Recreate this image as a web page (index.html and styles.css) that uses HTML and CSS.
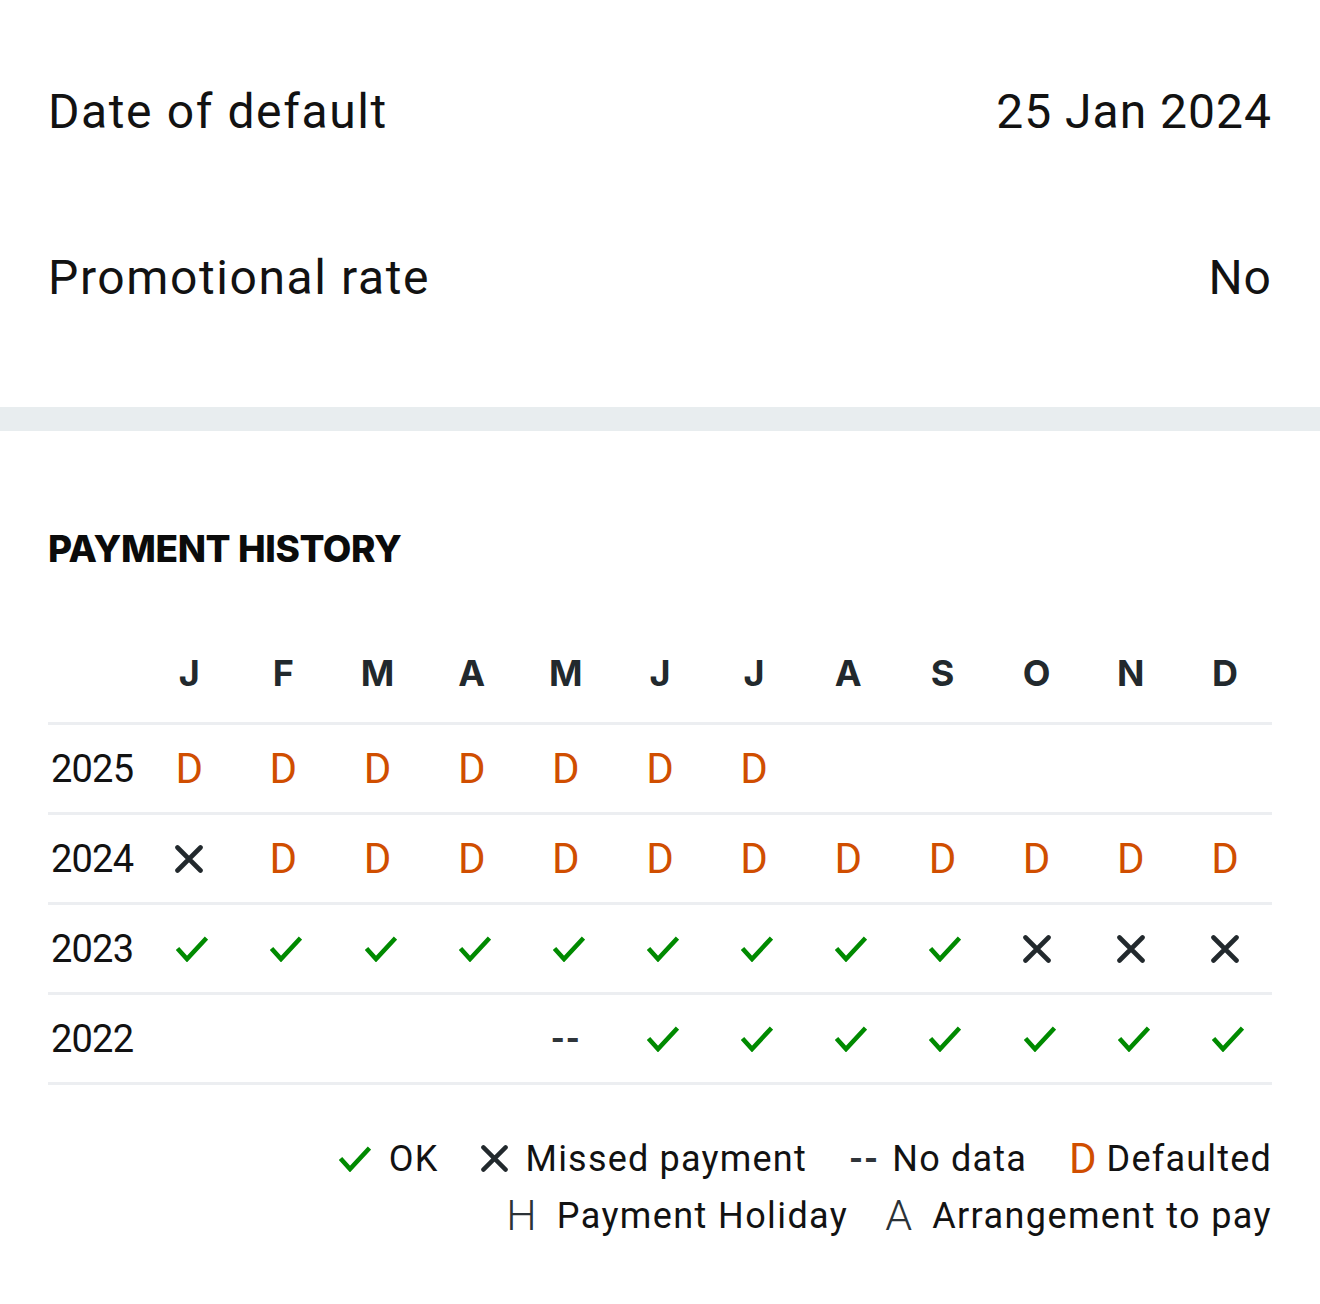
FILE: index.html
```html
<!DOCTYPE html>
<html lang="en">
<head>
<meta charset="utf-8">
<title>Account details</title>
<link rel="stylesheet" href="styles.css">
</head>
<body>
<section class="details">
  <div class="detail-row"><span class="label">Date of default</span><span class="value">25 Jan 2024</span></div>
  <div class="detail-row"><span class="label">Promotional rate</span><span class="value">No</span></div>
</section>
<div class="divider"></div>
<section class="history">
  <h2 class="title">PAYMENT HISTORY</h2>
  <div class="grid">
    <div class="row head">
      <span class="cell year"></span>
      <span class="cell m">J</span><span class="cell m">F</span><span class="cell m">M</span><span class="cell m">A</span><span class="cell m">M</span><span class="cell m">J</span><span class="cell m">J</span><span class="cell m">A</span><span class="cell m">S</span><span class="cell m">O</span><span class="cell m">N</span><span class="cell m">D</span>
    </div>
    <div class="row">
      <span class="cell year">2025</span>
      <span class="cell d">D</span><span class="cell d">D</span><span class="cell d">D</span><span class="cell d">D</span><span class="cell d">D</span><span class="cell d">D</span><span class="cell d">D</span><span class="cell"></span><span class="cell"></span><span class="cell"></span><span class="cell"></span><span class="cell"></span>
    </div>
    <div class="row">
      <span class="cell year">2024</span>
      <span class="cell"><svg class="ic-x" viewBox="0 0 28 28"><path d="M2.5 2.5L25.5 25.5M25.5 2.5L2.5 25.5"/></svg></span>
      <span class="cell d">D</span><span class="cell d">D</span><span class="cell d">D</span><span class="cell d">D</span><span class="cell d">D</span><span class="cell d">D</span><span class="cell d">D</span><span class="cell d">D</span><span class="cell d">D</span><span class="cell d">D</span><span class="cell d">D</span>
    </div>
    <div class="row">
      <span class="cell year">2023</span>
      <span class="cell ok"><svg class="ic-ok" viewBox="0 0 32 26"><path d="M1.5 12.5L11 23L30.5 2"/></svg></span>
      <span class="cell ok"><svg class="ic-ok" viewBox="0 0 32 26"><path d="M1.5 12.5L11 23L30.5 2"/></svg></span>
      <span class="cell ok"><svg class="ic-ok" viewBox="0 0 32 26"><path d="M1.5 12.5L11 23L30.5 2"/></svg></span>
      <span class="cell ok"><svg class="ic-ok" viewBox="0 0 32 26"><path d="M1.5 12.5L11 23L30.5 2"/></svg></span>
      <span class="cell ok"><svg class="ic-ok" viewBox="0 0 32 26"><path d="M1.5 12.5L11 23L30.5 2"/></svg></span>
      <span class="cell ok"><svg class="ic-ok" viewBox="0 0 32 26"><path d="M1.5 12.5L11 23L30.5 2"/></svg></span>
      <span class="cell ok"><svg class="ic-ok" viewBox="0 0 32 26"><path d="M1.5 12.5L11 23L30.5 2"/></svg></span>
      <span class="cell ok"><svg class="ic-ok" viewBox="0 0 32 26"><path d="M1.5 12.5L11 23L30.5 2"/></svg></span>
      <span class="cell ok"><svg class="ic-ok" viewBox="0 0 32 26"><path d="M1.5 12.5L11 23L30.5 2"/></svg></span>
      <span class="cell"><svg class="ic-x" viewBox="0 0 28 28"><path d="M2.5 2.5L25.5 25.5M25.5 2.5L2.5 25.5"/></svg></span>
      <span class="cell"><svg class="ic-x" viewBox="0 0 28 28"><path d="M2.5 2.5L25.5 25.5M25.5 2.5L2.5 25.5"/></svg></span>
      <span class="cell"><svg class="ic-x" viewBox="0 0 28 28"><path d="M2.5 2.5L25.5 25.5M25.5 2.5L2.5 25.5"/></svg></span>
    </div>
    <div class="row">
      <span class="cell year">2022</span>
      <span class="cell"></span><span class="cell"></span><span class="cell"></span><span class="cell"></span>
      <span class="cell nd">--</span>
      <span class="cell ok"><svg class="ic-ok" viewBox="0 0 32 26"><path d="M1.5 12.5L11 23L30.5 2"/></svg></span>
      <span class="cell ok"><svg class="ic-ok" viewBox="0 0 32 26"><path d="M1.5 12.5L11 23L30.5 2"/></svg></span>
      <span class="cell ok"><svg class="ic-ok" viewBox="0 0 32 26"><path d="M1.5 12.5L11 23L30.5 2"/></svg></span>
      <span class="cell ok"><svg class="ic-ok" viewBox="0 0 32 26"><path d="M1.5 12.5L11 23L30.5 2"/></svg></span>
      <span class="cell ok"><svg class="ic-ok" viewBox="0 0 32 26"><path d="M1.5 12.5L11 23L30.5 2"/></svg></span>
      <span class="cell ok"><svg class="ic-ok" viewBox="0 0 32 26"><path d="M1.5 12.5L11 23L30.5 2"/></svg></span>
      <span class="cell ok"><svg class="ic-ok" viewBox="0 0 32 26"><path d="M1.5 12.5L11 23L30.5 2"/></svg></span>
    </div>
  </div>
  <div class="legend">
    <ul class="legend-row">
      <li class="item"><svg class="ic-ok" viewBox="0 0 32 26"><path d="M1.5 12.5L11 23L30.5 2"/></svg><span class="ltext">OK</span></li>
      <li class="item"><svg class="ic-x small" viewBox="0 0 28 28"><path d="M2.5 2.5L25.5 25.5M25.5 2.5L2.5 25.5"/></svg><span class="ltext">Missed payment</span></li>
      <li class="item"><span class="sym nd">--</span><span class="ltext tight">No data</span></li>
      <li class="item"><span class="sym d">D</span><span class="ltext tighter">Defaulted</span></li>
    </ul>
    <ul class="legend-row second">
      <li class="item"><span class="sym grey">H</span><span class="ltext wide">Payment Holiday</span></li>
      <li class="item"><span class="sym grey">A</span><span class="ltext wide">Arrangement to pay</span></li>
    </ul>
  </div>
</section>
</body>
</html>
```

FILE: styles.css
```css
* { box-sizing: border-box; }
body {
  margin: 0;
  background: #ffffff;
  color: #121212;
  font-family: Roboto, "Noto Sans", sans-serif;
}
.details {
  padding: 28px 48px 47px 48px;
}
.detail-row {
  display: flex;
  justify-content: space-between;
  align-items: center;
  height: 166px;
  font-size: 48px;
}
.label { letter-spacing: 1.6px; }
.value { letter-spacing: 1px; }
.divider {
  height: 24px;
  background: #e8edef;
}
.history {
  padding: 96px 48px 60px 48px;
}
.title {
  margin: 0;
  font-family: Inter, Roboto, sans-serif;
  font-weight: 800;
  font-size: 37px;
  line-height: 44px;
  letter-spacing: -0.4px;
  color: #0b0b0b;
}
.grid {
  margin-top: 54px;
}
.row {
  display: grid;
  grid-template-columns: repeat(13, 1fr);
  height: 90px;
  border-bottom: 3px solid #eceef1;
  align-items: center;
}
.row.head {
  height: 100px;
  padding-bottom: 2px;
}
.cell {
  display: flex;
  justify-content: center;
  align-items: center;
}
.cell.year {
  justify-content: flex-start;
  padding-left: 3px;
  font-size: 38px;
  letter-spacing: -0.8px;
  color: #121212;
}
.cell.m {
  font-family: Inter, Roboto, sans-serif;
  font-weight: 700;
  font-size: 36px;
  color: #22292d;
}
.d {
  color: #d04e00;
  font-size: 42px;
  font-weight: 400;
}
.nd {
  font-size: 36px;
  font-weight: 700;
  color: #2f353a;
  letter-spacing: 1px;
}
.ic-ok {
  width: 32px;
  height: 26px;
  fill: none;
  stroke: #008a00;
  stroke-width: 4.6;
}
.cell.ok .ic-ok { margin-left: 6px; }
.ic-x {
  width: 28px;
  height: 28px;
  fill: none;
  stroke: #22292d;
  stroke-width: 4.6;
  stroke-linecap: round;
}
.ic-x.small { width: 27px; height: 27px; }
.legend {
  margin-top: 45px;
  display: flex;
  flex-direction: column;
  align-items: flex-end;
}
.legend-row {
  list-style: none;
  margin: 0;
  padding: 0;
  display: flex;
  justify-content: flex-end;
  column-gap: 42px;
}
.legend-row.second { column-gap: 37px; }
.item {
  display: flex;
  align-items: center;
  height: 57px;
  font-size: 36px;
  letter-spacing: 1.2px;
}
.ltext { margin-left: 18px; }
.ltext.tight { margin-left: 13px; }
.ltext.tighter { margin-left: 10px; }
.ltext.wide { margin-left: 20px; letter-spacing: 1.4px; }
.sym { line-height: 1; }
.sym.d { font-size: 42px; letter-spacing: 0; }
.sym.nd { letter-spacing: 1px; }
.sym.grey { color: #2b3237; font-size: 43px; font-weight: 300; letter-spacing: 0; }
```
